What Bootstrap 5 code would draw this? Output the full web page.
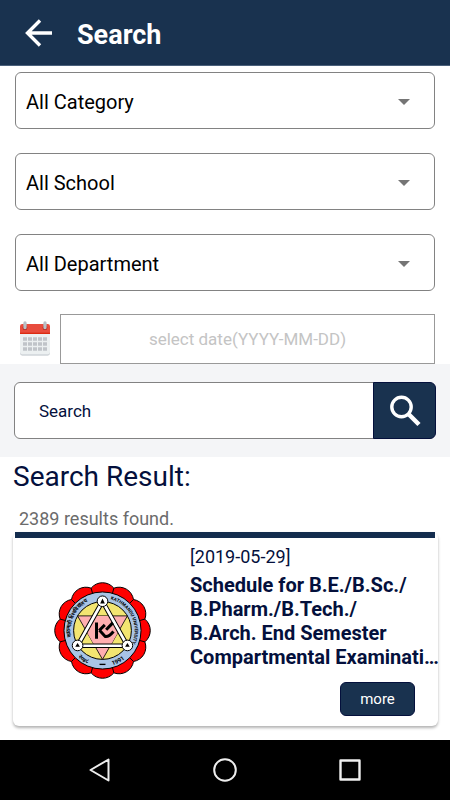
<!DOCTYPE html>
<html lang="en">
<head>
<meta charset="utf-8">
<meta name="viewport" content="width=device-width, initial-scale=1">
<title>Search</title>
<link href="https://cdn.jsdelivr.net/npm/bootstrap@5.3.0/dist/css/bootstrap.min.css" rel="stylesheet">
<style>
:root { --navy: #19324f; --ink: #04103c; --line: #828282; }
body { font-family: Roboto, "Noto Sans", sans-serif; background: #fff; color: var(--ink); }
.app-bar { background: var(--navy); border-bottom: 1px solid #4a607b; height: 66px; padding: 0 24px; gap: 24px; }
.app-bar h1 { font-size: 27px; line-height: 32px; padding-top: 4px; }
.filters { padding: 6px 15px 0; }
.filters .form-select {
  height: 57px; margin-bottom: 24px; padding: 2px 56px 0 10px; font-size: 20px; color: #000;
  border: 1px solid var(--line); border-radius: 6px;
  background-image: url("data:image/svg+xml,%3csvg xmlns='http://www.w3.org/2000/svg' viewBox='0 0 12 6'%3e%3cpath fill='%23757575' d='M0 0h12L6 6z'/%3e%3c/svg%3e");
  background-size: 12px 6px; background-position: right 24px top 26px;
}
.date-line { gap: 9px; margin-top: -1px; padding-left: 4px; }
.date-line .form-control { height: 50px; border: 1px solid #999; font-size: 17px; color: #555; }
.date-line .form-control::placeholder { color: #c4c4c4; }
.find-band { background: #f4f5f7; padding: 18px 14px; }
.find-band .form-control { height: 57px; border: 1px solid var(--line); border-radius: 6px; padding: 0 24px; font-size: 17px; color: var(--ink); }
.find-band .form-control::placeholder { color: var(--ink); opacity: 1; }
.find-btn { width: 63px; background: var(--navy); border: 1px solid var(--ink); border-radius: 6px; }
.results { padding: 0 12px 14px 13px; }
.results-title { font-size: 28px; line-height: 32px; margin: 4px 0 16px; }
.results-count { font-size: 18px; line-height: 20px; color: #6b6b6b; padding-left: 6px; margin-bottom: 3px; }
.result-card { border-radius: 6px; box-shadow: 0 2px 3px rgba(0,0,0,.3); height: 194px; }
.result-rule { height: 6px; background: #132d4e; margin: 0 3px 0 2px; }
.emblem-cell { width: 177px; padding-top: 44px; padding-left: 41px; }
.result-date { font-size: 18px; line-height: 20px; margin: 9px 0 6px; }
.result-name { font-size: 20px; line-height: 24px; margin-bottom: 13px; margin-right: -2px; }
.more-btn { width: 75px; height: 34px; background: var(--navy); border: 1px solid var(--ink); border-radius: 6px; font-size: 15px; margin-right: 23px; }
.system-bar { background: #000; height: 60px; padding: 0 37px; }
.system-bar .btn { width: 125px; }
</style>
<script src="https://cdn.jsdelivr.net/npm/bootstrap@5.3.0/dist/js/bootstrap.bundle.min.js"></script>
</head>
<body class="min-vh-100 d-flex flex-column">
<header class="app-bar d-flex align-items-center text-white">
  <button class="btn p-0 border-0 text-white d-flex" type="button" aria-label="Back">
    <svg width="29" height="28" viewBox="0 0 29 28" fill="none" stroke="currentColor" stroke-width="3.4"><path d="M28 14H4M16 1.500L3.500 14 16 26.500"/></svg>
  </button>
  <h1 class="fw-bold m-0">Search</h1>
</header>

<main class="flex-grow-1">
  <form>
    <div class="filters">
      <select class="form-select" aria-label="Category"><option>All Category</option></select>
      <select class="form-select" aria-label="School"><option>All School</option></select>
      <select class="form-select" aria-label="Department"><option>All Department</option></select>
      <div class="date-line d-flex align-items-center">
        <label for="date" class="d-flex" aria-label="Date">
          <svg width="32" height="36" viewBox="0 0 96 108">
            <path fill="#cfd4d8" d="M3 34H93V97q0 7-7 7H10q-7 0-7-7z"/>
            <path fill="#ecf0f1" d="M3 34H93V93q0 7-7 7H10q-7 0-7-7z"/>
            <path fill="#e84c3d" d="M3 39V16q0-7 7-7H86q7 0 7 7V39z"/>
            <path fill="#dc2b12" d="M3 35h90v4H3z"/>
            <g fill="#a81e14"><circle cx="18" cy="20" r="7"/><circle cx="78" cy="20" r="7"/></g>
            <g stroke="#b9c0c5" stroke-width="10" stroke-linecap="round"><path d="M18 6v14M78 6v14"/></g>
            <path d="M12 54H84M12 69H84M12 84H84" stroke="#c0c4c9" stroke-width="11" stroke-dasharray="12 3"/>
          </svg>
        </label>
        <input id="date" class="form-control rounded-0 text-center" type="text" placeholder="select date(YYYY-MM-DD)">
      </div>
    </div>
    <div class="find-band">
      <div class="input-group flex-nowrap">
        <input class="form-control" type="text" placeholder="Search" aria-label="Search">
        <button class="btn find-btn p-0 d-flex align-items-center justify-content-center" type="button" aria-label="Search">
          <svg width="32" height="32" viewBox="0 0 32 32" fill="none" stroke="#fff"><circle cx="12.500" cy="12" r="9.700" stroke-width="3.400"/><path d="M19 18.500l11 11" stroke-width="4.500"/></svg>
        </button>
      </div>
    </div>
  </form>

  <section class="results">
    <h2 class="results-title fw-normal">Search Result:</h2>
    <p class="results-count">2389 results found.</p>
    <article class="result-card bg-white">
      <div class="result-rule"></div>
      <div class="d-flex">
        <div class="emblem-cell flex-shrink-0">
          <svg width="97" height="97" viewBox="-146 -146 292 292" role="img" aria-label="Kathmandu University">
            <defs>
              <path id="ring" d="M0 97A97 97 0 1 1 .1 97"/>
              <path id="ringLow" d="M-109 0A109 109 0 0 0 109 0"/>
              <clipPath id="inner"><path d="M-75-44H75L0 87z"/></clipPath>
            </defs>
            <path fill="#f00" stroke="#000" stroke-width="3" d="M127.500-34.200A44 44 0 0 1 127.500 34.200A44 44 0 0 1 93.300 93.300A44 44 0 0 1 34.200 127.500A44 44 0 0 1-34.200 127.500A44 44 0 0 1-93.300 93.300A44 44 0 0 1-127.500 34.200A44 44 0 0 1-127.500-34.200A44 44 0 0 1-93.300-93.300A44 44 0 0 1-34.200-127.500A44 44 0 0 1 34.200-127.500A44 44 0 0 1 93.300-93.300A44 44 0 0 1 127.500-34.200"/>
            <path stroke="#000" stroke-width="3" d="M127.500 34.200L-127.500-34.200M93.300 93.300L-93.300-93.300M34.200 127.500L-34.200-127.500M-34.200 127.500L34.200-127.500M-93.300 93.300L93.300-93.300M-127.500 34.200L127.500-34.200"/>
            <circle r="116" fill="#a9c4e6" stroke="#000" stroke-width="3"/>
            <circle r="87" fill="#f3e571" stroke="#000" stroke-width="3"/>
            <path fill="#ffaeb0" stroke="#000" stroke-width="2.500" d="M-75-44H75L0 87z"/>
            <path fill="#ffaeb0" d="M0-84L72 45H-72z" clip-path="url(#inner)"/>
            <path fill="none" stroke="#000" stroke-width="14" d="M0-88L75 46H-75z"/>
            <path fill="none" stroke="#fff" stroke-width="8" d="M0-88L75 46H-75z"/>
            <g fill="#fff" stroke="#000" stroke-width="3"><circle cy="-88" r="16"/><circle cx="-75" cy="45" r="16"/><circle cx="75" cy="45" r="16"/></g>
            <path d="M-7-81L0-96 7-81zM-82 49l7-11 7 11zM68 49l7-11 7 11z"/>
            <path fill="none" stroke="#000" stroke-width="9" d="M-18-24V25M-10 0L7-17M-9-1L8 18Q19 20 33 3M11-2L31-23"/>
            <g font-size="14" font-weight="700" font-family="Roboto, sans-serif">
              <text><textPath href="#ring" startOffset="54%">KATHMANDU UNIVERSITY</textPath></text>
              <text font-size="16"><textPath href="#ring" startOffset="22%">काठमाडौं विश्वविद्यालय</textPath></text>
              <text font-size="18"><textPath href="#ringLow" startOffset="26%">२०४८</textPath></text>
              <text font-size="18"><textPath href="#ringLow" startOffset="59%">1991</textPath></text>
            </g>
            <path d="M-9 102H9" stroke="#000" stroke-width="4"/>
          </svg>
        </div>
        <div class="flex-grow-1 overflow-visible w-50">
          <p class="result-date">[2019-05-29]</p>
          <h3 class="result-name fw-bold text-truncate">Schedule for B.E./B.Sc./<br>B.Pharm./B.Tech./<br>B.Arch. End Semester<br>Compartmental Examination</h3>
          <button class="btn more-btn text-white p-0 d-block ms-auto" type="button">more</button>
        </div>
      </div>
    </article>
  </section>
</main>

<nav class="system-bar d-flex justify-content-center align-items-center" aria-label="System">
  <button class="btn border-0 p-0" type="button" aria-label="Back"><svg width="24" height="26" viewBox="0 0 24 26" fill="none" stroke="#eee" stroke-width="2" stroke-linejoin="round"><path d="M2.500 13L20.500 2.500v21z"/></svg></button>
  <button class="btn border-0 p-0" type="button" aria-label="Home"><svg width="26" height="26" viewBox="0 0 26 26" fill="none" stroke="#eee" stroke-width="2"><circle cx="13" cy="13" r="10.800"/></svg></button>
  <button class="btn border-0 p-0" type="button" aria-label="Recent apps"><svg width="24" height="26" viewBox="0 0 24 26" fill="none" stroke="#eee" stroke-width="2.400" stroke-linejoin="round"><path d="M2.500 3.500h19v19h-19z"/></svg></button>
</nav>
</body>
</html>
